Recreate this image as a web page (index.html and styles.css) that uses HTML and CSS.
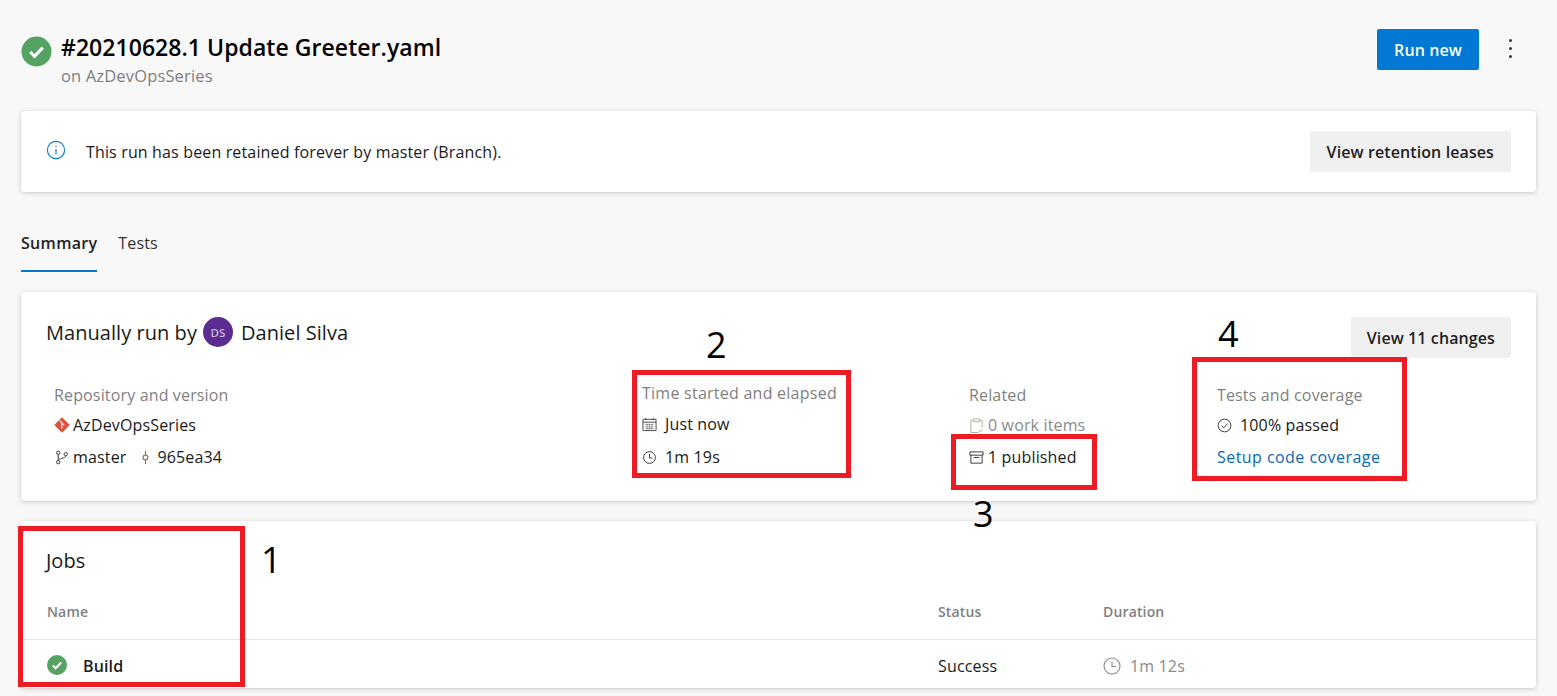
FILE: index.html
```html
<!DOCTYPE html>
<html lang="en">
<head>
    <meta charset="UTF-8">
    <title>#20210628.1 Update Greeter.yaml</title>
    <link rel="stylesheet" href="styles.css">
</head>
<body>

<header class="page-header">
    <svg class="status-icon-large" viewBox="0 0 32 32"><circle cx="16" cy="16" r="15.5" fill="#55a362"/><path d="M9.5 16.5l4.5 4.5 8.5-9" fill="none" stroke="#fff" stroke-width="3.2"/></svg>
    <div class="title-block">
        <h1>#20210628.1 Update Greeter.yaml</h1>
        <div class="subtitle">on AzDevOpsSeries</div>
    </div>
    <button class="btn btn-primary">Run new</button>
    <div class="more-dots"><span></span><span></span><span></span></div>
</header>

<section class="card banner">
    <svg class="icon-info" viewBox="0 0 20 20"><circle cx="10" cy="10" r="8.6" fill="none" stroke="#0078d4" stroke-width="1.1"/><path d="M10 9v5.2M10 5.8v1.2" stroke="#0078d4" stroke-width="1.1"/></svg>
    <span class="banner-text">This run has been retained forever by master (Branch).</span>
    <button class="btn">View retention leases</button>
</section>

<nav class="tabs">
    <a class="tab active">Summary</a>
    <a class="tab">Tests</a>
</nav>

<section class="card summary">
    <div class="summary-top">
        <span class="run-by">Manually run by</span>
        <span class="avatar">DS</span>
        <span class="run-by">Daniel Silva</span>
        <button class="btn">View 11 changes</button>
    </div>
    <div class="summary-grid">
        <div class="col">
            <div class="col-label">Repository and version</div>
            <div class="col-row">
                <svg class="icon repo" viewBox="0 0 16 16"><path d="M8 .3l7.7 7.7L8 15.7.3 8z" fill="#e2503c"/><path d="M5.6 3.6l4.6 4.6M7.8 6v5.4" stroke="#fff" stroke-width="1.2"/></svg>
                AzDevOpsSeries
            </div>
            <div class="col-row">
                <svg class="icon branch" viewBox="0 0 16 16" fill="none" stroke="#333" stroke-width="1"><circle cx="4.5" cy="3" r="1.8"/><circle cx="4.5" cy="13" r="1.8"/><circle cx="12.5" cy="4.5" r="1.8"/><path d="M4.5 4.8v6.4M12.5 6.3c0 3-8 2.3-8 4.9"/></svg>
                master
                <svg class="icon commit" viewBox="0 0 16 16" fill="none" stroke="#7d6a2e" stroke-width="1.1"><circle cx="8" cy="8" r="2.6"/><path d="M8 1v4.4M8 10.6V15"/></svg>
                965ea34
            </div>
        </div>
        <div class="col col-time">
            <div class="col-label">Time started and elapsed</div>
            <div class="col-row">
                <svg class="icon" viewBox="0 0 16 16" fill="none" stroke="#444" stroke-width="1"><path d="M1 2.5h14v12H1zM1 5.5h14M4 1v2M12 1v2"/><path d="M3.5 8h9M3.5 10.5h9M3.5 12.5h9M5.5 7v6.5M8 7v6.5M10.5 7v6.5" stroke-width=".7" stroke="#777"/></svg>
                Just now
            </div>
            <div class="col-row">
                <svg class="icon" viewBox="0 0 16 16" fill="none" stroke="#333" stroke-width="1"><circle cx="8" cy="8" r="6.3"/><path d="M8 4v4.5h3.2"/></svg>
                1m 19s
            </div>
        </div>
        <div class="col col-related">
            <div class="col-label">Related</div>
            <div class="col-row muted">
                <svg class="icon small" viewBox="0 0 16 16" fill="none" stroke="#b3a894" stroke-width="1"><path d="M5 2.5H2v13h8M11 2.5h3V10M5 1h6v3H5zM10 13.5l1.5 1.5 3-3.5"/></svg>
                0 work items
            </div>
            <div class="col-row">
                <svg class="icon small" viewBox="0 0 16 16" fill="none" stroke="#333" stroke-width="1"><path d="M1 2h14v3.5H1zM2 5.5V14h12V5.5M5 8h6"/></svg>
                1 published
            </div>
        </div>
        <div class="col">
            <div class="col-label">Tests and coverage</div>
            <div class="col-row">
                <svg class="icon" viewBox="0 0 16 16" fill="none" stroke="#333" stroke-width="1"><circle cx="8" cy="8" r="6.8"/><path d="M5 8.3l2.2 2.2L11.2 6"/></svg>
                100% passed
            </div>
            <div class="col-row"><a class="link">Setup code coverage</a></div>
        </div>
    </div>
</section>

<section class="card jobs">
    <h2>Jobs</h2>
    <div class="jobs-row jobs-head">
        <span class="cell-name">Name</span>
        <span class="cell-status">Status</span>
        <span class="cell-duration">Duration</span>
    </div>
    <div class="jobs-row jobs-item">
        <span class="cell-name job-name">
            <svg class="status-icon" viewBox="0 0 20 20"><circle cx="10" cy="10" r="10" fill="#55a362"/><path d="M5.8 10.4l2.9 2.9 5.5-5.8" fill="none" stroke="#fff" stroke-width="2.1"/></svg>
            Build
        </span>
        <span class="cell-status">Success</span>
        <span class="cell-duration muted">
            <svg class="icon clock" viewBox="0 0 18 18" fill="none" stroke="#8a8a8a" stroke-width="1.1"><circle cx="9" cy="9" r="8"/><path d="M9 4.5v5h4"/></svg>
            1m 12s
        </span>
    </div>
</section>

<!-- annotations drawn on top of the screenshot -->
<div class="mark mark-1"></div>
<div class="mark mark-2"></div>
<div class="mark mark-3"></div>
<div class="mark mark-4"></div>
<span class="mark-num num-1">1</span>
<span class="mark-num num-2">2</span>
<span class="mark-num num-3">3</span>
<span class="mark-num num-4">4</span>

</body>
</html>
```

FILE: styles.css
```css
html, body {
    height: 696px;
    overflow: hidden;
}
body {
    position: relative;
    margin: 0;
    padding: 0 21px;
    background-color: #f8f8f8;
    font-family: "Open Sans", "Noto Sans", Arial, sans-serif;
    font-size: 16px;
    letter-spacing: 0.15px;
    color: #1a1a1a;
    box-sizing: border-box;
}
button {
    font-family: inherit;
    letter-spacing: inherit;
}
.page-header {
    display: flex;
    align-items: flex-start;
    height: 111px;
    box-sizing: border-box;
    padding-top: 29px;
}
.status-icon-large {
    width: 31px;
    height: 31px;
    margin-top: 7px;
    margin-right: 9px;
}
.title-block {
    flex: 1;
}
h1 {
    margin: 0;
    font-size: 23px;
    font-weight: 600;
    line-height: 36px;
    letter-spacing: 0.05px;
    color: #000;
}
.subtitle {
    font-size: 16.5px;
    line-height: 22px;
    color: #7f7f7f;
}
.btn {
    height: 41px;
    padding: 0 17px;
    border: none;
    border-radius: 2px;
    background-color: #f0f0f0;
    color: #1f1f1f;
    font-size: 16px;
    font-weight: 600;
    letter-spacing: 0.1px;
}
.btn-primary {
    width: 102px;
    padding: 0;
    background-color: #0078d4;
    color: #fff;
}
.more-dots {
    display: flex;
    flex-direction: column;
    gap: 5px;
    padding: 10px 24px 0 30px;
}
.more-dots span {
    width: 3px;
    height: 3px;
    border-radius: 50%;
    background-color: #333;
}
.card {
    background-color: #fff;
    border-radius: 4px;
    box-shadow: 0 1px 5px rgba(0, 0, 0, 0.2);
}
.banner {
    display: flex;
    align-items: center;
    height: 81px;
    padding: 0 25px;
    box-sizing: border-box;
}
.icon-info {
    width: 20px;
    height: 20px;
    margin-right: 20px;
    margin-top: -4px;
}
.banner-text {
    flex: 1;
}
.tabs {
    display: flex;
    height: 80px;
    gap: 21px;
    padding-top: 38px;
    box-sizing: border-box;
    margin-bottom: 20px;
}
.tab {
    height: 42px;
    line-height: 26px;
    box-sizing: border-box;
    color: #333;
}
.tab.active {
    font-weight: 600;
    letter-spacing: 0.3px;
    color: #222;
    border-bottom: 2px solid #0078d4;
}
.summary {
    height: 209px;
    margin-bottom: 20px;
    padding: 25px 25px 0;
    box-sizing: border-box;
}
.summary-top {
    display: flex;
    align-items: flex-start;
    height: 40px;
}
.run-by {
    font-size: 20px;
    line-height: 32px;
    letter-spacing: 0.05px;
}
.avatar {
    display: flex;
    align-items: center;
    justify-content: center;
    width: 30px;
    height: 30px;
    margin: 0 8px 0 6px;
    border-radius: 50%;
    background-color: #5c2d91;
    color: #c8b6dc;
    font-size: 11.5px;
    font-weight: 600;
    letter-spacing: 0;
}
.summary-top .btn {
    margin-left: auto;
    padding: 0 16px;
}
.summary-grid {
    display: grid;
    grid-template-columns: 588px 327px 248px auto;
    margin-top: 22px;
    padding-left: 8px;
}
.col-label {
    line-height: 32px;
    height: 30px;
    color: #7f7f7f;
}
.col-time .col-label {
    margin-top: -2px;
    height: 31px;
    letter-spacing: 0.25px;
}
.col-time .col-row + .col-row {
    margin-top: 1px;
}
.col-row {
    display: flex;
    align-items: center;
    height: 32px;
}
.muted {
    color: #8a8a8a;
}
.icon {
    width: 15px;
    height: 15px;
    margin-right: 8px;
}
.icon.small {
    margin-right: 4px;
}
.icon.repo {
    width: 16px;
    height: 16px;
    margin-right: 3px;
}
.icon.branch {
    margin-right: 4px;
}
.icon.commit {
    margin-left: 12px;
    margin-right: 4px;
}
.link {
    color: #0e66b0;
    letter-spacing: 0.45px;
}
.jobs {
    height: 167px;
    padding-top: 22px;
    box-sizing: border-box;
}
h2 {
    margin: 0 0 0 25px;
    font-size: 20px;
    font-weight: 400;
    line-height: 36px;
    letter-spacing: 0;
}
.jobs-row {
    display: grid;
    grid-template-columns: 917px 165px auto;
    align-items: center;
}
.jobs-head {
    height: 61px;
    padding-top: 5px;
    box-sizing: border-box;
    font-size: 14px;
    font-weight: 600;
    color: #7f7f7f;
    border-bottom: 1px solid #e6e6e6;
}
.jobs-item {
    height: 48px;
    padding-top: 4px;
    box-sizing: border-box;
}
.cell-name {
    padding-left: 26px;
}
.job-name {
    display: flex;
    align-items: center;
    font-weight: 600;
}
.status-icon {
    width: 20px;
    height: 20px;
    margin-right: 16px;
    margin-top: -3px;
}
.cell-duration {
    display: flex;
    align-items: center;
}
.icon.clock {
    width: 18px;
    height: 18px;
    margin-right: 9px;
}
.mark {
    position: absolute;
    border: 5px solid #ed1c24;
    box-sizing: border-box;
}
.mark-1 { left: 18px; top: 526px; width: 227px; height: 161px; }
.mark-2 { left: 632px; top: 370px; width: 219px; height: 108px; }
.mark-3 { left: 951px; top: 434px; width: 146px; height: 56px; }
.mark-4 { left: 1192px; top: 357px; width: 215px; height: 124px; }
.mark-num {
    position: absolute;
    font-size: 36px;
    line-height: 44px;
    letter-spacing: 0;
    color: #000;
}
.num-1 { left: 261px; top: 538px; }
.num-2 { left: 706px; top: 323px; }
.num-3 { left: 973px; top: 492px; }
.num-4 { left: 1218px; top: 312px; }
```
